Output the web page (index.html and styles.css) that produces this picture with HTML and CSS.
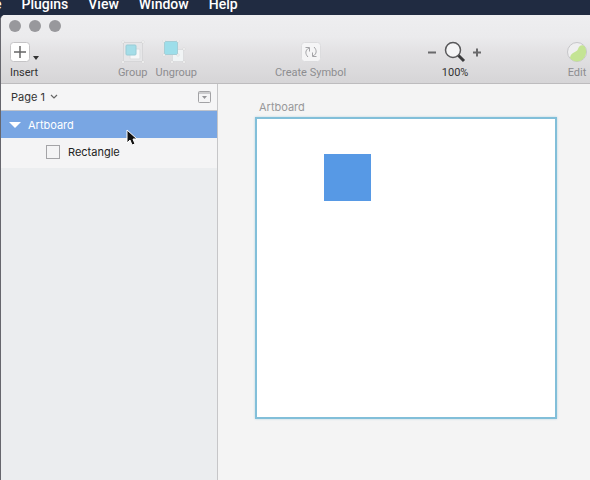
FILE: index.html
```html
<!DOCTYPE html>
<html lang="en">
<head>
<meta charset="utf-8">
<title>Artboard</title>
<link rel="stylesheet" href="styles.css">
</head>
<body>
<nav class="menubar">
  <a href="#">e</a>
  <a href="#">Plugins</a>
  <a href="#">View</a>
  <a href="#">Window</a>
  <a href="#">Help</a>
</nav>
<div class="window">
  <header class="chrome">
    <div class="lights">
      <button class="light" aria-label="Close"></button>
      <button class="light" aria-label="Minimize"></button>
      <button class="light" aria-label="Zoom window"></button>
    </div>
    <div class="toolbar">
      <button class="tool insert">
        <svg width="30" height="24" viewBox="0 0 30 24">
          <rect x=".5" y="2.5" width="19" height="19" rx="3" fill="#fff" stroke="#c5c4c6"/>
          <path d="M4 12h12M10 6v12" stroke="#666" stroke-width="1.5"/>
          <path d="M23 16h6l-3 4z" fill="#333"/>
        </svg>
        <span>Insert</span>
      </button>
      <div class="pair">
        <button class="tool" disabled>
          <svg width="24" height="24" viewBox="0 0 24 24">
            <rect x="2.500" y="2.500" width="19" height="19" fill="#e6e6e8" stroke="#d6d6d8"/>
            <rect x="9" y="9" width="10" height="10" rx="1" fill="#f6f7f8" stroke="#dcdddf"/>
            <rect x="5" y="5" width="10" height="10" rx="1" fill="#a4dde8" stroke="#98ccd6"/>
            <g fill="#fff" stroke="#d0d0d2" stroke-width=".5"><path d="M1 1h2v2H1zM21 1h2v2h-2zM1 21h2v2H1zM21 21h2v2h-2z"/></g>
          </svg>
          <span>Group</span>
        </button>
        <button class="tool" disabled>
          <svg width="34" height="24" viewBox="0 0 34 24">
            <rect x="13.500" y="9.500" width="11" height="12" fill="#f1f4f5" stroke="#dcdddf"/>
            <rect x="5.500" y="1.500" width="13" height="13" fill="#9ddeea" stroke="#a5ced6"/>
            <g fill="#fff" stroke="#d0d0d2" stroke-width=".5"><path d="M4 0h2v2H4zM18 0h2v2h-2zM4 14h2v2H4zM18 14h2v2h-2zM24 8h2v2h-2zM12 21h2v2h-2zM24 21h2v2h-2z"/></g>
          </svg>
          <span>Ungroup</span>
        </button>
      </div>
      <button class="tool" disabled>
        <svg width="20" height="24" viewBox="0 0 20 24">
          <rect x=".5" y="2.500" width="19" height="19" rx="3" fill="#f5f5f6" stroke="#dcdcde"/>
          <g fill="none" stroke="#a3a3a6"><path d="M4.500 7.500h4v4M8 8C4 10 4 14 7 17M15.500 16.500h-4v-4M12 16c4-2 4-6 1-9"/></g>
        </svg>
        <span>Create Symbol</span>
      </button>
      <div class="tool zoom">
        <div class="zoom-row">
          <button aria-label="Zoom out"><svg width="9" height="9" viewBox="0 0 9 9"><path d="M0 4.500h8" stroke="#69696b" stroke-width="2"/></svg></button>
          <svg width="22" height="24" viewBox="0 0 22 24">
            <path d="M14 15l6 6" stroke="#3b3b3d" stroke-width="3"/>
            <circle cx="9" cy="10" r="7.500" fill="#f5f5f6" stroke="#59595b" stroke-width="1.500"/>
          </svg>
          <button aria-label="Zoom in"><svg width="9" height="9" viewBox="0 0 9 9"><path d="M0 4.500h8M4 .5v8" stroke="#69696b" stroke-width="2"/></svg></button>
        </div>
        <span>100%</span>
      </div>
      <button class="tool" disabled>
        <svg width="22" height="24" viewBox="0 0 22 24">
          <circle cx="11" cy="12" r="9.500" fill="#efeff0" stroke="#c6c6c9"/>
          <path d="M4 18C5 11 11 13 12 9s5-5 7-2c3 5 0 12-5 14-4 1-8 0-10-3z" fill="#c4e494"/>
        </svg>
        <span>Edit</span>
      </button>
    </div>
  </header>
  <div class="content">
    <aside class="sidebar">
      <div class="pages">
        <button class="page">Page 1
          <svg width="8" height="6" viewBox="0 0 8 6"><path d="M1 1l3 3 3-3" fill="none" stroke="#666" stroke-width="1.200"/></svg>
        </button>
        <button aria-label="Toggle page list">
          <svg width="13" height="12" viewBox="0 0 13 12"><rect x=".5" y=".5" width="12" height="11" rx="1" fill="none" stroke="#a2a2a5"/><path d="M1 2h11" stroke="#a2a2a5"/><path d="M4 5h5L6.500 8z" fill="#949497"/></svg>
        </button>
      </div>
      <ul class="layers">
        <li class="layer selected">
          <svg width="12" height="8" viewBox="0 0 12 8"><path d="M0 1h12L6 7z" fill="#fff"/></svg>
          <span>Artboard</span>
          <svg class="pointer" width="12" height="18" viewBox="0 0 12 18"><path d="M1 1v13l3-3 2 5 3-1-2-5h4z" fill="#111" stroke="#fff"/></svg>
        </li>
        <li class="layer child"><i class="swatch"></i><span>Rectangle</span></li>
      </ul>
    </aside>
    <main class="canvas">
      <div class="board-name">Artboard</div>
      <div class="artboard"><div class="shape"></div></div>
    </main>
  </div>
</div>
</body>
</html>
```
FILE: styles.css
```css
* { box-sizing: border-box; }
body {
  margin: 0;
  height: 100vh;
  display: flex;
  flex-direction: column;
  overflow: hidden;
  background: #202b41;
  font: 11px/14px Inter, "Liberation Sans", sans-serif;
  color: #333;
}
button {
  padding: 0;
  border: 0;
  background: none;
  font: inherit;
  color: inherit;
}
svg { display: block; flex: none; }

.menubar {
  height: 15px;
  display: flex;
  align-items: flex-start;
  gap: 20px;
  margin-left: -6px;
  font: 500 14px/9px Roboto, "Liberation Sans", sans-serif;
}
.menubar a { color: #fff; text-decoration: none; }

.window {
  flex: 1;
  display: flex;
  flex-direction: column;
  border-left: 1px solid #66666d;
  border-top-left-radius: 5px;
  overflow: hidden;
  background: #f4f4f4;
}
.chrome {
  height: 69px;
  border-bottom: 1px solid #bdbcbe;
  background: linear-gradient(#eeeef0 0, #ebebed 22px, #e3e2e4 36px, #d6d5d7 100%);
}
.lights { display: flex; gap: 8px; padding: 5px 8px 0; }
.light { width: 12px; height: 12px; border-radius: 50%; background: #98989c; }

.toolbar {
  display: flex;
  justify-content: space-between;
  padding: 8px 2px 0 9px;
  font-family: Roboto, "Liberation Sans", sans-serif;
}
.tool {
  display: flex;
  flex-direction: column;
  align-items: center;
  gap: 2px;
  white-space: nowrap;
}
.tool:disabled { color: #8d8d90; }
.insert { align-items: flex-start; }
.pair { display: flex; gap: 8px; }
.zoom { margin: 0 6px 0 4px; }
.zoom-row { display: flex; align-items: center; gap: 7px; }

.content { flex: 1; display: flex; }
.sidebar {
  width: 217px;
  flex: none;
  border-right: 1px solid #c6c6c8;
  background: #ebedef;
}
.pages {
  height: 27px;
  display: flex;
  align-items: center;
  justify-content: space-between;
  padding: 0 6px 0 10px;
  border-bottom: 1px solid #bfc3cb;
  background: #f5f5f6;
}
.page { display: flex; align-items: center; gap: 5px; }
.layers { margin: 0; padding: 0; list-style: none; background: #f4f4f5; }
.layer {
  position: relative;
  height: 27px;
  display: flex;
  align-items: center;
  gap: 7px;
  padding-left: 8px;
}
.selected { background: #79a6e3; color: #fff; }
.child { height: 30px; gap: 8px; padding: 0 0 2px 45px; color: #222; }
.swatch { width: 14px; height: 14px; border: 1px solid #a4a4a7; }
.pointer { position: absolute; left: 125px; top: 18px; z-index: 1; }

.canvas { flex: 1; padding: 16px 33px 0 37px; background: #f4f4f4; }
.board-name { padding: 0 4px 3px; color: #98989a; }
.artboard {
  position: relative;
  aspect-ratio: 1;
  border: 2px solid #82bfd9;
  background: #fff;
  box-shadow: 0 0 2px #b5d5e3;
}
.shape {
  position: absolute;
  left: 67px;
  top: 35px;
  width: 47px;
  height: 47px;
  background: #5799e5;
}
```
